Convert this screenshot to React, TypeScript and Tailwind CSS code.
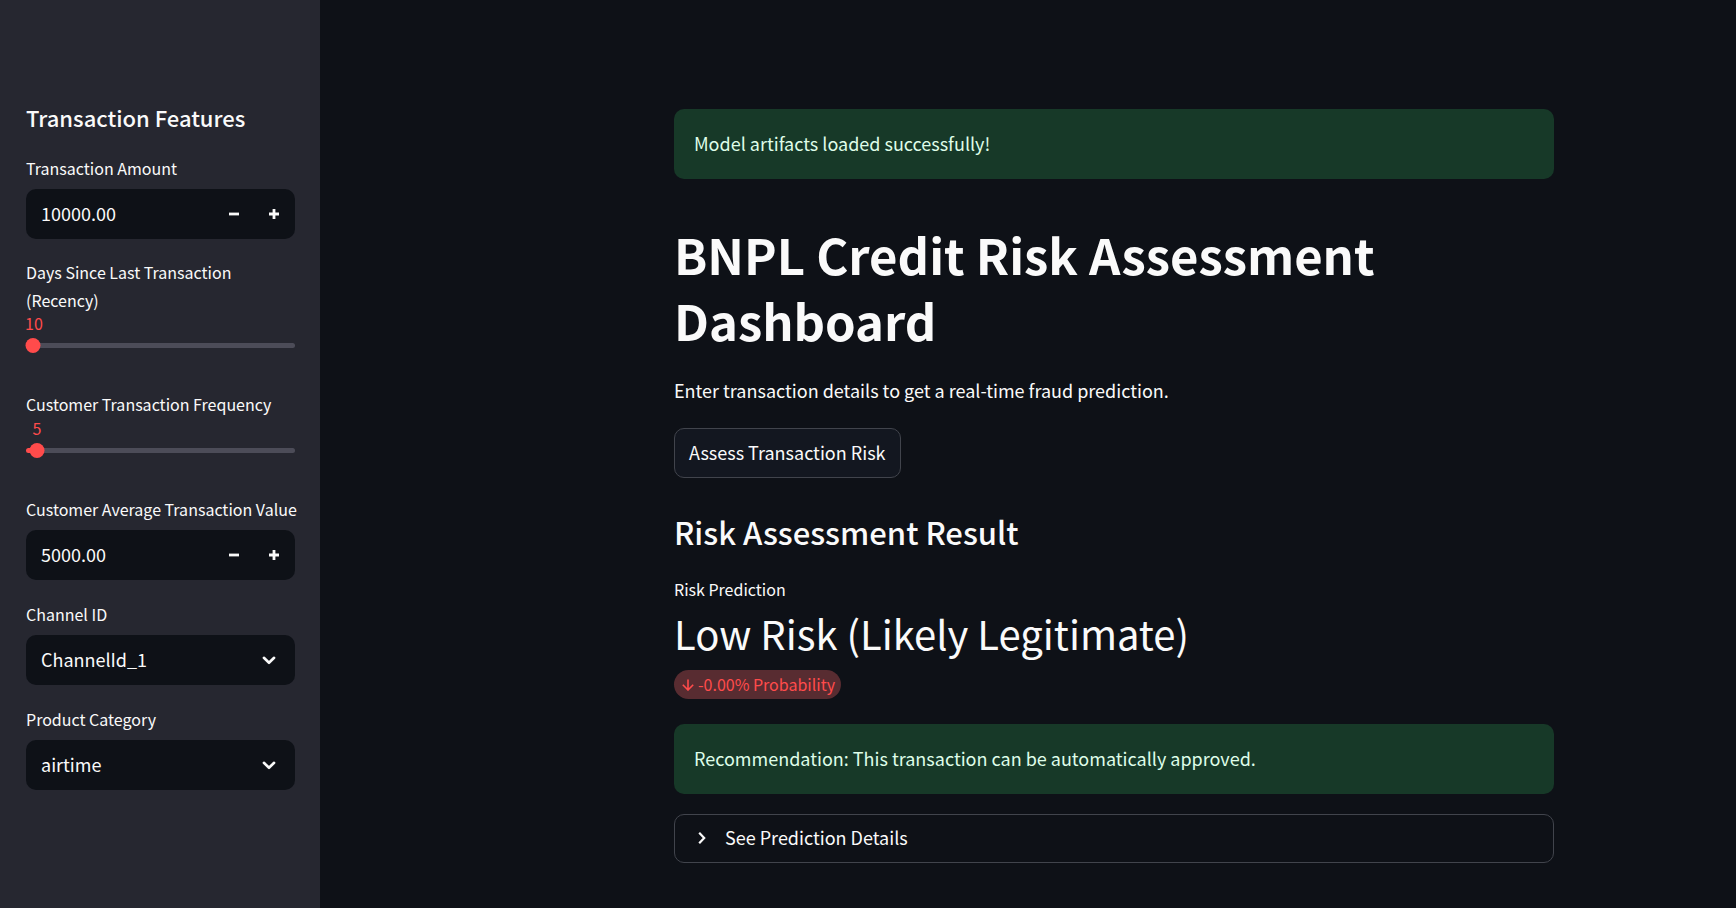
import { useId, useState, type ReactNode } from "react";

function Field({ id, label, children }: { id: string; label: string; children: ReactNode }) {
  return (
    <div className="flex flex-col">
      <label htmlFor={id} className="-mt-px -mr-3 mb-[6px] flex min-h-[30px] items-center text-base leading-7">
        {label}
      </label>
      {children}
    </div>
  );
}

function NumberField({ label, initial }: { label: string; initial: number }) {
  const id = useId();
  const [text, setText] = useState(initial.toFixed(2));
  const step = (delta: number) => setText((Number(text) + delta).toFixed(2));
  return (
    <Field id={id} label={label}>
      <div className="flex h-[50px] items-stretch overflow-hidden rounded-[10px] bg-[#0e1117] pr-px">
        <input
          id={id}
          value={text}
          onChange={(e) => setText(e.target.value)}
          inputMode="decimal"
          className="min-w-0 flex-1 bg-transparent pb-0.5 pl-[15px] text-lg outline-none"
        />
        <button type="button" aria-label={`Decrease ${label}`} onClick={() => step(-1)} className="flex w-10 items-center justify-center">
          <svg viewBox="0 0 10 10" className="size-[10px]" fill="currentColor" aria-hidden="true">
            <rect x="0" y="3.6" width="10" height="2.8" />
          </svg>
        </button>
        <button type="button" aria-label={`Increase ${label}`} onClick={() => step(1)} className="flex w-10 items-center justify-center">
          <svg viewBox="0 0 10 10" className="size-[10px]" fill="currentColor" aria-hidden="true">
            <path d="M3.6 0h2.8v3.6H10v2.8H6.4V10H3.6V6.4H0V3.6h3.6z" />
          </svg>
        </button>
      </div>
    </Field>
  );
}

function SliderField({ label, min, max, initial }: { label: string; min: number; max: number; initial: number }) {
  const id = useId();
  const [value, setValue] = useState(initial);
  const percent = ((value - min) / (max - min)) * 100;
  return (
    <div className="flex flex-col">
      <label htmlFor={id} className="-mt-px -mr-3 mb-px flex min-h-[30px] items-center text-base leading-7">
        {label}
      </label>
      <div className="relative h-[55px] pt-7">
        <output
          htmlFor={id}
          className="absolute -top-px -translate-x-1/2 text-base leading-[18px] text-[#ff4b4b]"
          style={{ left: `max(8px, ${percent}%)` }}
        >
          {value}
        </output>
        <div
          className="h-[5px] rounded-full"
          style={{ background: `linear-gradient(to right, #ff4b4b ${percent}%, #4c4c58 ${percent}%)` }}
        />
        <span
          className="absolute top-[23px] size-[15px] -translate-x-1/2 rounded-full bg-[#ff4b4b]"
          style={{ left: `${percent}%` }}
        />
        <input
          id={id}
          type="range"
          min={min}
          max={max}
          value={value}
          onChange={(e) => setValue(Number(e.target.value))}
          className="absolute inset-x-0 top-[23px] h-[15px] w-full cursor-pointer opacity-0"
        />
      </div>
    </div>
  );
}

function SelectField({ label, options }: { label: string; options: string[] }) {
  const id = useId();
  return (
    <Field id={id} label={label}>
      <div className="relative">
        <select id={id} className="h-[50px] w-full appearance-none rounded-[10px] bg-[#0e1117] pr-12 pb-0.5 pl-[15px] text-lg outline-none">
          {options.map((option) => (
            <option key={option}>{option}</option>
          ))}
        </select>
        <svg viewBox="0 0 14 9" className="pointer-events-none absolute top-[21px] right-[19px] h-[9px] w-[14px]" fill="none" stroke="currentColor" strokeWidth="2.6" strokeLinecap="round" strokeLinejoin="round" aria-hidden="true">
          <path d="M1.9 1.8 7 6.8l5.1-5" />
        </svg>
      </div>
    </Field>
  );
}

function Success({ children }: { children: ReactNode }) {
  return (
    <div role="alert" className="rounded-[10px] bg-[#173928] px-5 pt-[19px] pb-[21px] text-lg leading-[30px] text-[#dffde9]">
      {children}
    </div>
  );
}

export default function App() {
  return (
    <div className="flex min-h-screen bg-[#0e1117] font-['Noto_Sans_CJK_SC','Noto_Sans',sans-serif] text-[#fafafa]">
      <aside className="w-80 shrink-0 bg-[#262730] pt-[100px] pr-[25px] pl-[26px]">
        <h2 className="mb-5 text-[22px] leading-[34px] font-medium">Transaction Features</h2>
        <form className="flex flex-col gap-5" onSubmit={(e) => e.preventDefault()}>
          <NumberField label="Transaction Amount" initial={10000} />
          <SliderField label="Days Since Last Transaction (Recency)" min={1} max={365} initial={10} />
          <SliderField label="Customer Transaction Frequency" min={1} max={100} initial={5} />
          <NumberField label="Customer Average Transaction Value" initial={5000} />
          <SelectField label="Channel ID" options={["ChannelId_1", "ChannelId_2", "ChannelId_3", "ChannelId_5"]} />
          <SelectField label="Product Category" options={["airtime", "data_bundles", "financial_services", "utility_bill"]} />
        </form>
      </aside>

      <main className="min-w-0 flex-1 pt-[109px] pl-[172px]">
        <div className="mx-auto max-w-[880px]">
          <Success>Model artifacts loaded successfully!</Success>
          <h1 className="mt-[42px] text-[49px] leading-[66px] font-bold">BNPL Credit Risk Assessment Dashboard</h1>
          <p className="mt-[21px] text-lg leading-8">Enter transaction details to get a real-time fraud prediction.</p>
          <button type="button" className="mt-[22px] h-[50px] rounded-[10px] border border-[#41444c] bg-[#131720] px-[14px] pb-0.5 text-lg">
            Assess Transaction Risk
          </button>
          <h2 className="mt-[33px] text-[31px] leading-[42px] font-medium">Risk Assessment Result</h2>
          <p className="mt-[22px] text-base leading-7">Risk Prediction</p>
          <p className="text-[40px] leading-[60px]">Low Risk (Likely Legitimate)</p>
          <p className="mt-[7px] flex w-fit items-center gap-1 rounded-full bg-[#582c31] pr-1.5 pl-2 text-base leading-[29px] text-[#ff4b4b]">
            <svg viewBox="0 0 12 12" className="size-3" fill="none" stroke="currentColor" strokeWidth="1.6" aria-hidden="true">
              <path d="M6 .5v10.3M.8 5.8 6 11l5.2-5.2" />
            </svg>
            -0.00% Probability
          </p>
          <div className="mt-[25px] flex flex-col gap-5">
            <Success>Recommendation: This transaction can be automatically approved.</Success>
            <details className="group rounded-[10px] border border-[#41444c]">
              <summary className="flex cursor-pointer list-none items-center gap-4 px-5 pt-[7px] pb-[9px] text-lg leading-[31px]">
                <svg viewBox="0 0 14 14" className="size-[14px] group-open:rotate-90" fill="none" stroke="currentColor" strokeWidth="2.2" aria-hidden="true">
                  <path d="m4.2 1.8 5 5.2-5 5.2" />
                </svg>
                See Prediction Details
              </summary>
              <p className="px-5 pb-4 text-base">Fraud probability: 0.00%</p>
            </details>
          </div>
        </div>
      </main>
    </div>
  );
}
